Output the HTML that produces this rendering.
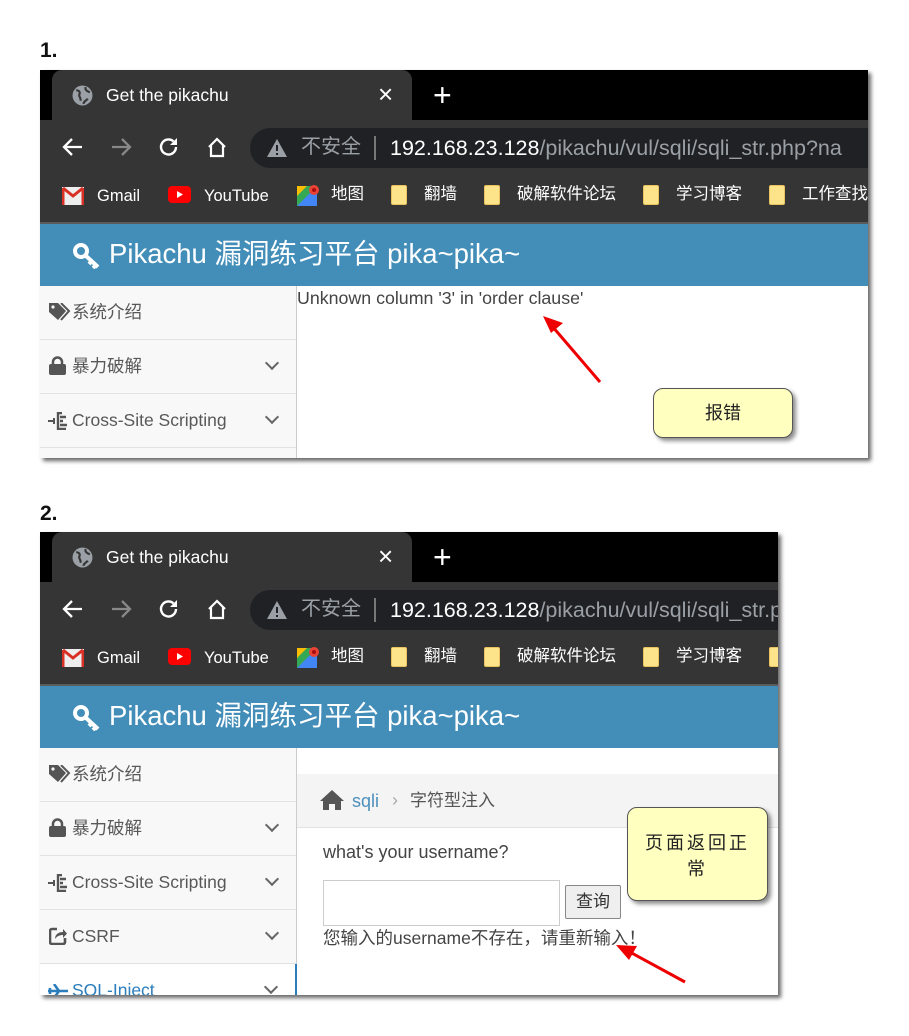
<!DOCTYPE html>
<html><head><meta charset="utf-8"><style>
*{margin:0;padding:0;box-sizing:border-box}
body{width:909px;height:1036px;background:#fff;position:relative;overflow:hidden;font-family:"Liberation Sans","Noto Sans CJK SC",sans-serif}
.a{position:absolute;white-space:nowrap;line-height:1.2}
.num{font-weight:bold;font-size:21px;color:#111}
.shot{position:absolute;overflow:hidden;background:#fff;box-shadow:3px 3px 4px rgba(0,0,0,.6)}
.tabbar{position:absolute;left:0;top:0;right:0;height:50px;background:#000}
.tab{position:absolute;left:12px;top:0;width:360px;height:50px;background:#353535;border-radius:10px 10px 0 0}
.tool{position:absolute;left:0;top:50px;right:0;height:104px;background:#353535;border-bottom:2px solid #5b5b5b}
.pill{position:absolute;left:210px;top:8px;width:900px;height:40px;background:#202124;border-radius:20px}
.w{color:#fff}
.hdr{position:absolute;left:0;top:154px;right:0;height:62px;background:#438eb9}
.side{position:absolute;left:0;top:216px;width:257px;bottom:0;background:#f8f8f8;border-right:1px solid #ccc}
.it{height:54px;border-bottom:1px solid #e2e2e2;position:relative;font-size:17.5px;color:#585858;line-height:52px;padding-left:32px}
.chev{position:absolute;right:19px;top:18px;width:10px;height:10px;border-right:2px solid #666;border-bottom:2px solid #666;transform:rotate(45deg)}
.fold{display:inline-block;width:16px;height:20px;background:#fde38a;border:1px solid #e8c35e;border-radius:2px;vertical-align:middle}
.bm{font-size:16.5px;color:#fff;line-height:20px}
.note{position:absolute;background:#ffffc0;border:1px solid #555;border-radius:10px;box-shadow:3px 3px 4px rgba(0,0,0,.45);font-size:18px;color:#222;text-align:center}
</style></head><body>

<div class="a num" style="left:40px;top:38px">1.</div>
<div class="a num" style="left:40px;top:501px">2.</div>

<!-- SHOT 1 -->
<div class="shot" style="left:40px;top:70px;width:828px;height:388px">
 <div class="tabbar"></div>
 <div class="tab"></div>
 <svg class="a" style="left:32px;top:15px" width="21" height="21" viewBox="0 0 20 20"><circle cx="10" cy="10" r="9.5" fill="#9aa0a6"/><path d="M4 5c3 0 4 2 3 4s2 3 1 6M13 2c-1 3 2 4 4 5M11 18c0-3 3-3 4-5" stroke="#353535" stroke-width="2" fill="none"/></svg>
 <div class="a w" style="left:66px;top:15px;font-size:17.5px">Get the pikachu</div>
 <div class="a w" style="left:338px;top:11px;font-size:26px;line-height:1">×</div>
 <div class="a w" style="left:393px;top:9px;font-size:32px;line-height:1">+</div>
 <div class="tool">
  <svg class="a" style="left:22px;top:16px" width="22" height="22" viewBox="0 0 22 22"><path d="M20 11H3M10 3l-8 8 8 8" stroke="#fff" stroke-width="2.3" fill="none"/></svg>
  <svg class="a" style="left:70px;top:16px" width="22" height="22" viewBox="0 0 22 22"><path d="M2 11h17M12 3l8 8-8 8" stroke="#888" stroke-width="2.3" fill="none"/></svg>
  <svg class="a" style="left:118px;top:16px" width="22" height="22" viewBox="0 0 22 22"><path d="M18 11a7.5 7.5 0 1 1-2.5-5.6" stroke="#fff" stroke-width="2.4" fill="none"/><path d="M19 2v7h-7z" fill="#fff"/></svg>
  <svg class="a" style="left:166px;top:16px" width="22" height="22" viewBox="0 0 22 22"><path d="M3 11l8-8 8 8M5 9v11h12V9" stroke="#fff" stroke-width="2.2" fill="none"/></svg>
  <div class="pill">
   <svg class="a" style="left:17px;top:11px" width="20" height="18" viewBox="0 0 20 18"><path d="M10 0L20 18H0z" fill="#9aa0a6"/><path d="M10 6v6M10 14v2" stroke="#202124" stroke-width="2"/></svg>
   <div class="a" style="left:51px;top:6px;font-size:20px;color:#9aa0a6;line-height:26px">不安全</div>
   <div class="a" style="left:124px;top:8px;width:2px;height:24px;background:#777"></div>
   <div class="a" style="left:140px;top:7px;font-size:21.5px;color:#fff;line-height:26px">192.168.23.128<span style="color:#9aa0a6">/pikachu/vul/sqli/sqli_str.php?na</span></div>
  </div>
  <svg class="a" style="left:22px;top:67px" width="22" height="18" viewBox="0 0 22 18"><rect width="22" height="18" fill="#eee"/><path d="M1 1l10 8 10-8" stroke="#d93025" stroke-width="3" fill="none"/><path d="M1 1v17M21 1v17" stroke="#d93025" stroke-width="3"/></svg>
  <div class="a bm" style="left:57px;top:66px">Gmail</div>
  <svg class="a" style="left:128px;top:66px" width="23" height="17" viewBox="0 0 23 17"><rect width="23" height="17" rx="4" fill="#f00"/><path d="M9 5v7l6-3.5z" fill="#fff"/></svg>
  <div class="a bm" style="left:164px;top:66px">YouTube</div>
  <svg class="a" style="left:257px;top:64px" width="22" height="22" viewBox="0 0 22 22"><rect width="20" height="20" y="2" fill="#34a853"/><path d="M0 22L20 2v20z" fill="#4285f4"/><path d="M0 2h10L0 12z" fill="#fbbc04"/><circle cx="17" cy="6" r="5" fill="#ea4335"/><circle cx="17" cy="6" r="2" fill="#a50e0e"/></svg>
  <div class="a bm" style="left:291px;top:64px">地图</div>
  <span class="a fold" style="left:351px;top:65px"></span><div class="a bm" style="left:384px;top:64px">翻墙</div>
  <span class="a fold" style="left:444px;top:65px"></span><div class="a bm" style="left:477px;top:64px">破解软件论坛</div>
  <span class="a fold" style="left:603px;top:65px"></span><div class="a bm" style="left:636px;top:64px">学习博客</div>
  <span class="a fold" style="left:729px;top:65px"></span><div class="a bm" style="left:762px;top:64px">工作查找</div>
 </div>
 <div class="hdr">
  <svg class="a" style="left:33px;top:19px" width="28" height="26" viewBox="0 0 28 26"><circle cx="8" cy="8" r="6" stroke="#fff" stroke-width="4" fill="none"/><path d="M12 12l13 12M19 18l-3 3M23 22l-3 3" stroke="#fff" stroke-width="4"/></svg>
  <div class="a w" style="left:69px;top:13px;font-size:27.5px;line-height:34px">Pikachu 漏洞练习平台 pika~pika~</div>
 </div>
 <div class="side">
  <div class="it"><svg class="a" style="left:9px;top:17px" width="22" height="18" viewBox="0 0 22 18"><path d="M0 0h9l8 8-8 9-9-8z" fill="#555"/><circle cx="4" cy="4" r="1.6" fill="#f8f8f8"/><path d="M12 0l8 8-8 9" stroke="#555" stroke-width="2" fill="none"/></svg>系统介绍</div>
  <div class="it"><svg class="a" style="left:9px;top:16px" width="17" height="19" viewBox="0 0 17 19"><path d="M4 9V6a4.5 4.5 0 0 1 9 0v3" stroke="#555" stroke-width="2.5" fill="none"/><rect y="8" width="17" height="11" rx="2" fill="#555"/></svg>暴力破解<span class="chev"></span></div>
  <div class="it"><svg class="a" style="left:8px;top:18px" width="20" height="18" viewBox="0 0 20 18"><path d="M0 9h7M6 6v6" stroke="#555" stroke-width="2"/><path d="M10 0v18M10 1h4M12 5h6M12 9h3M12 13h7M10 17h8" stroke="#555" stroke-width="2.4"/></svg>Cross-Site Scripting<span class="chev"></span></div>
 </div>
 <div class="a" style="left:257px;top:218px;font-size:17.8px;color:#444">Unknown column '3' in 'order clause'</div>
</div>

<!-- SHOT 2 -->
<div class="shot" style="left:40px;top:532px;width:738px;height:463px">
 <div class="tabbar"></div>
 <div class="tab"></div>
 <svg class="a" style="left:32px;top:15px" width="21" height="21" viewBox="0 0 20 20"><circle cx="10" cy="10" r="9.5" fill="#9aa0a6"/><path d="M4 5c3 0 4 2 3 4s2 3 1 6M13 2c-1 3 2 4 4 5M11 18c0-3 3-3 4-5" stroke="#353535" stroke-width="2" fill="none"/></svg>
 <div class="a w" style="left:66px;top:15px;font-size:17.5px">Get the pikachu</div>
 <div class="a w" style="left:338px;top:11px;font-size:26px;line-height:1">×</div>
 <div class="a w" style="left:393px;top:9px;font-size:32px;line-height:1">+</div>
 <div class="tool">
  <svg class="a" style="left:22px;top:16px" width="22" height="22" viewBox="0 0 22 22"><path d="M20 11H3M10 3l-8 8 8 8" stroke="#fff" stroke-width="2.3" fill="none"/></svg>
  <svg class="a" style="left:70px;top:16px" width="22" height="22" viewBox="0 0 22 22"><path d="M2 11h17M12 3l8 8-8 8" stroke="#888" stroke-width="2.3" fill="none"/></svg>
  <svg class="a" style="left:118px;top:16px" width="22" height="22" viewBox="0 0 22 22"><path d="M18 11a7.5 7.5 0 1 1-2.5-5.6" stroke="#fff" stroke-width="2.4" fill="none"/><path d="M19 2v7h-7z" fill="#fff"/></svg>
  <svg class="a" style="left:166px;top:16px" width="22" height="22" viewBox="0 0 22 22"><path d="M3 11l8-8 8 8M5 9v11h12V9" stroke="#fff" stroke-width="2.2" fill="none"/></svg>
  <div class="pill">
   <svg class="a" style="left:17px;top:11px" width="20" height="18" viewBox="0 0 20 18"><path d="M10 0L20 18H0z" fill="#9aa0a6"/><path d="M10 6v6M10 14v2" stroke="#202124" stroke-width="2"/></svg>
   <div class="a" style="left:51px;top:6px;font-size:20px;color:#9aa0a6;line-height:26px">不安全</div>
   <div class="a" style="left:124px;top:8px;width:2px;height:24px;background:#777"></div>
   <div class="a" style="left:140px;top:7px;font-size:21.5px;color:#fff;line-height:26px">192.168.23.128<span style="color:#9aa0a6">/pikachu/vul/sqli/sqli_str.php?na</span></div>
  </div>
  <svg class="a" style="left:22px;top:67px" width="22" height="18" viewBox="0 0 22 18"><rect width="22" height="18" fill="#eee"/><path d="M1 1l10 8 10-8" stroke="#d93025" stroke-width="3" fill="none"/><path d="M1 1v17M21 1v17" stroke="#d93025" stroke-width="3"/></svg>
  <div class="a bm" style="left:57px;top:66px">Gmail</div>
  <svg class="a" style="left:128px;top:66px" width="23" height="17" viewBox="0 0 23 17"><rect width="23" height="17" rx="4" fill="#f00"/><path d="M9 5v7l6-3.5z" fill="#fff"/></svg>
  <div class="a bm" style="left:164px;top:66px">YouTube</div>
  <svg class="a" style="left:257px;top:64px" width="22" height="22" viewBox="0 0 22 22"><rect width="20" height="20" y="2" fill="#34a853"/><path d="M0 22L20 2v20z" fill="#4285f4"/><path d="M0 2h10L0 12z" fill="#fbbc04"/><circle cx="17" cy="6" r="5" fill="#ea4335"/><circle cx="17" cy="6" r="2" fill="#a50e0e"/></svg>
  <div class="a bm" style="left:291px;top:64px">地图</div>
  <span class="a fold" style="left:351px;top:65px"></span><div class="a bm" style="left:384px;top:64px">翻墙</div>
  <span class="a fold" style="left:444px;top:65px"></span><div class="a bm" style="left:477px;top:64px">破解软件论坛</div>
  <span class="a fold" style="left:603px;top:65px"></span><div class="a bm" style="left:636px;top:64px">学习博客</div>
  <span class="a fold" style="left:729px;top:65px"></span>
 </div>
 <div class="hdr">
  <svg class="a" style="left:33px;top:19px" width="28" height="26" viewBox="0 0 28 26"><circle cx="8" cy="8" r="6" stroke="#fff" stroke-width="4" fill="none"/><path d="M12 12l13 12M19 18l-3 3M23 22l-3 3" stroke="#fff" stroke-width="4"/></svg>
  <div class="a w" style="left:69px;top:13px;font-size:27.5px;line-height:34px">Pikachu 漏洞练习平台 pika~pika~</div>
 </div>
 <div class="side">
  <div class="it"><svg class="a" style="left:9px;top:17px" width="22" height="18" viewBox="0 0 22 18"><path d="M0 0h9l8 8-8 9-9-8z" fill="#555"/><circle cx="4" cy="4" r="1.6" fill="#f8f8f8"/><path d="M12 0l8 8-8 9" stroke="#555" stroke-width="2" fill="none"/></svg>系统介绍</div>
  <div class="it"><svg class="a" style="left:9px;top:16px" width="17" height="19" viewBox="0 0 17 19"><path d="M4 9V6a4.5 4.5 0 0 1 9 0v3" stroke="#555" stroke-width="2.5" fill="none"/><rect y="8" width="17" height="11" rx="2" fill="#555"/></svg>暴力破解<span class="chev"></span></div>
  <div class="it"><svg class="a" style="left:8px;top:18px" width="20" height="18" viewBox="0 0 20 18"><path d="M0 9h7M6 6v6" stroke="#555" stroke-width="2"/><path d="M10 0v18M10 1h4M12 5h6M12 9h3M12 13h7M10 17h8" stroke="#555" stroke-width="2.4"/></svg>Cross-Site Scripting<span class="chev"></span></div>
  <div class="it"><svg class="a" style="left:9px;top:17px" width="18" height="18" viewBox="0 0 18 18"><path d="M8 2H3a2 2 0 0 0-2 2v11a2 2 0 0 0 2 2h11a2 2 0 0 0 2-2v-4" stroke="#555" stroke-width="2.6" fill="none"/><path d="M6 12c0-5 4-7 8-7V2l4 4.5-4 4.5V8c-3 0-6 1-8 4z" fill="#555"/></svg>CSRF<span class="chev"></span></div>
  <div class="it" style="background:#fff;color:#2b7dbc;border-right:2px solid #2b7dbc;margin-right:-1px"><svg class="a" style="left:8px;top:20px" width="20" height="14" viewBox="0 0 20 14"><path d="M0 7h20M6 0l5 7-5 7M2 4v6" stroke="#2b7dbc" stroke-width="2.6" fill="none"/></svg>SQL-Inject<span class="chev"></span></div>
 </div>
 <div class="a" style="left:257px;top:242px;width:481px;height:54px;background:#f4f4f4;border-bottom:1px solid #e2e2e2"></div>
 <svg class="a" style="left:280px;top:258px" width="24" height="20" viewBox="0 0 24 20"><path d="M12 0L0 11h3v9h6v-6h6v6h6v-9h3z" fill="#555"/></svg>
 <div class="a" style="left:312px;top:257px;font-size:18px;color:#4c8fbd;line-height:24px">sqli</div>
 <div class="a" style="left:352px;top:256px;font-size:18px;color:#aaa;line-height:24px">›</div>
 <div class="a" style="left:370px;top:257px;font-size:17px;color:#555;line-height:24px">字符型注入</div>
 <div class="a" style="left:283px;top:310px;font-size:18px;color:#444">what's your username?</div>
 <div class="a" style="left:283px;top:348px;width:237px;height:46px;border:1px solid #ccc;background:#fff"></div>
 <div class="a" style="left:525px;top:353px;width:56px;height:34px;border:1px solid #888;border-radius:2px;background:#efefef;font-size:17px;color:#333;text-align:center;line-height:32px">查询</div>
 <div class="a" style="left:283px;top:396px;font-size:17.5px;color:#444">您输入的username不存在，请重新输入！</div>
</div>

<div class="note" style="left:653px;top:388px;width:140px;height:50px;line-height:48px">报错</div>
<div class="note" style="left:627px;top:807px;width:141px;height:94px;padding:22px 16px 0;line-height:26px;letter-spacing:3px">页面返回正常</div>

<svg class="a" style="left:0;top:0" width="909" height="1036">
 <g stroke="#e00" stroke-width="3" fill="#e00">
  <line x1="600" y1="382" x2="552" y2="326"/>
  <path d="M543 316l20 7-12 10z" stroke="none"/>
  <line x1="685" y1="982" x2="628" y2="951"/>
  <path d="M616 945l21 1-8 14z" stroke="none"/>
 </g>
</svg>
</body></html>
